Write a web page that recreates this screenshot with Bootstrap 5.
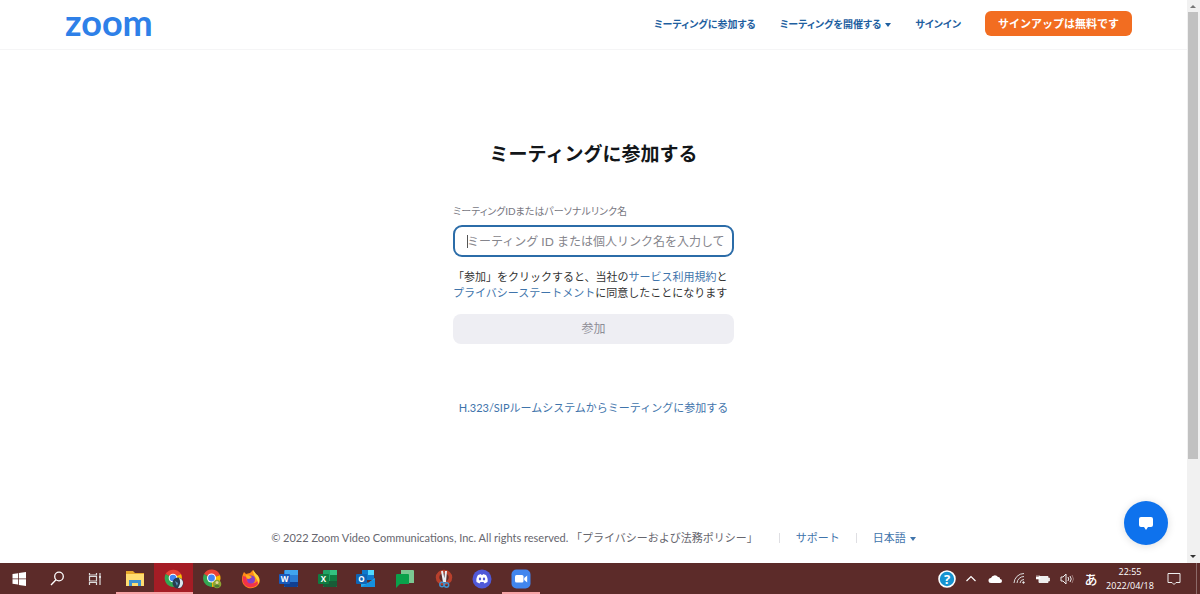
<!DOCTYPE html>
<html lang="ja">
<head>
<meta charset="utf-8">
<meta name="viewport" content="width=device-width, initial-scale=1">
<title>ミーティングに参加する - Zoom</title>
<link href="https://cdn.jsdelivr.net/npm/bootstrap@5.3.0/dist/css/bootstrap.min.css" rel="stylesheet">
<style>
body{font-family:Lato,"Noto Sans CJK JP",sans-serif;font-size:11px;line-height:16px;color:#232333;background:#fff}
a{color:#3f74ab;text-decoration:none}
.caret::after{content:"";display:inline-block;margin-left:4px;vertical-align:1px;border:4px solid transparent;border-top-color:currentColor;border-bottom:0;border-left-width:3px;border-right-width:3px}
.site-head{height:50px;padding:0 55px 2px 65px;border-bottom:1px solid #f5f5f6}
.brand{font-size:36px;line-height:40px;font-weight:700;color:#2e80e8}
.menu{gap:24px}
.menu a,.menu .caret{font-size:10px;font-weight:700;color:#1f5f9f;font-feature-settings:"palt"}
.plain{background:none;border:0;padding:0;color:#3f74ab}
.signup{background:#f26d21;color:#fff;font-size:11px;font-weight:700;line-height:16px;height:25px;width:147px;padding:0;border:0;border-radius:6px}
.join-main{padding-top:91px}
.join-title{font-size:19px;line-height:26px;font-weight:700;color:#131619;margin-bottom:36px}
.join-form{width:281px}
.field-label{font-size:10px;line-height:16px;color:#77777f;margin-bottom:6px;font-feature-settings:"palt"}
.id-wrap{position:relative}
.id-box{height:32px;font-size:12px;padding:0 8px 0 12px;border:2px solid #2b6ca8;border-radius:9px;color:#232333}
.id-box:focus{border-color:#2b6ca8;box-shadow:none}
.id-box::placeholder{color:#85858c}
.text-cursor{position:absolute;left:14px;top:10px;width:1px;height:13px;background:#555}
.terms{margin:12px 0 13px;white-space:nowrap;color:#333}
.join-btn{height:30px;font-size:12px;line-height:16px;padding:0;background:#eeeef3;color:#8d8d96;border:0;border-radius:8px}
.join-btn:disabled{background:#eeeef3;color:#8d8d96;opacity:1}
.room-link{margin-top:56px}
.site-foot{color:#66666e;padding-bottom:17px}
.foot-text{padding-right:21px}
.foot-part{border-left:1px solid #dfdfe3;line-height:10px}
.chat-btn{position:absolute;right:19px;bottom:18px;width:44px;height:44px;border:0;border-radius:50%;background:#0e72ed;box-shadow:0 1px 9px #0002}
.scroll-rail{width:13px;background:#f1f1f1;padding:0 2px 0 1px}
.scroll-thumb{height:83%;background:#c1c1c1}
.rail-arrow{height:12px;flex:none}
.taskbar{height:31px;background:#5c2b29;color:#fff;font-family:"Open Sans","Noto Sans CJK JP",sans-serif}
.apps{width:540px}
.app-btn{flex:1 1 0;background:none;border:0;border-bottom:2px solid transparent;padding:2px 0 0;display:flex;align-items:center;justify-content:center;min-width:0}
.app-btn.open{border-bottom-color:#f5a3a5}
.app-btn.current{background:#a51d25}
.app-btn svg{width:20px;height:20px}
.tray-btn{width:24px;background:none;border:0;padding:0;color:#fff;display:flex;align-items:center;justify-content:center}
.ime{font-size:13px;font-weight:500}
.clock{width:54px;font-size:9px;line-height:14px}
.notice{width:34px}
.desk-edge{width:9px}
.desk-edge::before{content:"";width:1px;height:100%;background:#8c6a69;margin-left:5px;display:block}
</style>
</head>
<body>
<div class="d-flex flex-column min-vh-100">
  <div class="d-flex flex-grow-1">
    <div class="position-relative d-flex flex-column flex-grow-1">
      <header class="site-head d-flex align-items-center justify-content-between">
        <a href="#" class="brand mb-1">zoom</a>
        <nav class="menu d-flex align-items-center">
          <a href="#">ミーティングに参加する</a>
          <button type="button" class="plain caret">ミーティングを開催する</button>
          <a href="#">サインイン</a>
          <button type="button" class="btn signup">サインアップは無料です</button>
        </nav>
      </header>
      <main class="join-main flex-grow-1 d-flex flex-column align-items-center">
        <h1 class="join-title">ミーティングに参加する</h1>
        <form class="join-form">
          <label class="field-label d-block" for="meeting-id">ミーティングIDまたはパーソナルリンク名</label>
          <div class="id-wrap">
            <input id="meeting-id" class="form-control id-box" type="text" placeholder="ミーティング ID または個人リンク名を入力して">
            <span class="text-cursor"></span>
          </div>
          <p class="terms">「参加」をクリックすると、当社の<a href="#">サービス利用規約</a>と<br><a href="#">プライバシーステートメント</a>に同意したことになります</p>
          <button type="submit" class="btn join-btn w-100" disabled>参加</button>
        </form>
        <a href="#" class="room-link">H.323/SIPルームシステムからミーティングに参加する</a>
      </main>
      <footer class="site-foot d-flex justify-content-center align-items-center">
        <span class="foot-text">© 2022 Zoom Video Communications, Inc. All rights reserved. 「プライバシーおよび法務ポリシー」</span>
        <span class="foot-part px-3"><a href="#">サポート</a></span>
        <span class="foot-part ps-3"><button type="button" class="plain caret">日本語</button></span>
      </footer>
      <button type="button" class="chat-btn d-flex align-items-center justify-content-center p-0" aria-label="チャット">
        <svg width="16" height="15" viewBox="0 0 16 15" fill="#fff"><path d="M3 1h10a2 2 0 0 1 2 2v6a2 2 0 0 1-2 2h-3l-2 3-2-3H3a2 2 0 0 1-2-2V3a2 2 0 0 1 2-2z"/></svg>
      </button>
    </div>
    <div class="scroll-rail d-flex flex-column" aria-hidden="true">
      <svg class="rail-arrow" viewBox="0 0 10 12"><path d="M2 8l3-3 3 3z" fill="#777"/></svg>
      <div class="flex-grow-1"><div class="scroll-thumb"></div></div>
      <svg class="rail-arrow" viewBox="0 0 10 12"><path d="M2 4l3 3 3-3z" fill="#333"/></svg>
    </div>
  </div>
  <div class="taskbar d-flex justify-content-between">
    <div class="apps d-flex">
      <button type="button" class="app-btn" aria-label="スタート"><svg viewBox="0 0 20 20" fill="#fff"><path d="M3.500 5l5.500-.8v5.300H3.500zM9.800 4.100L17 3v6.500H9.800zM3.500 10.300H9v5.300l-5.500-.8zM9.800 10.300H17V17l-7.200-1.100z"/></svg></button>
      <button type="button" class="app-btn" aria-label="検索"><svg viewBox="0 0 20 20" fill="none" stroke="#fff" stroke-width="1.300"><circle cx="11" cy="7.500" r="4.300"/><path d="M8 10.700L3 16"/></svg></button>
      <button type="button" class="app-btn" aria-label="タスクビュー"><svg viewBox="0 0 20 20" fill="none" stroke="#ddd" stroke-width="1.200"><path d="M3.500 4v2h7V4M3.500 16v-2.500h7V16M3.500 7.500h7v4.500h-7zM14 4v12"/><path d="M13 8h2" stroke-width="2"/></svg></button>
      <button type="button" class="app-btn open" aria-label="エクスプローラー"><svg viewBox="0 0 20 20"><path d="M1 2h7l2 2h9v13H1z" fill="#e8a92c"/><path d="M1 5h18v12H1z" fill="#ffdd71"/><path d="M4 11h12v6h-3v-3H7v3H4z" fill="#3f92d2"/></svg></button>
      <button type="button" class="app-btn open current" aria-label="Chrome"><svg viewBox="0 0 20 20"><path d="M9 9L1.600 5A9 9 0 0 1 17 5z" fill="#ea4335"/><path d="M9 9l8-4a9 9 0 0 1-7 13z" fill="#fbbc04"/><path d="M9 9L1.600 5A9 9 0 0 0 10 18z" fill="#34a853"/><circle cx="9" cy="9" r="4.300" fill="#fff"/><circle cx="9" cy="9" r="3.300" fill="#4285f4"/><circle cx="14" cy="14" r="5.500" fill="#263d52"/><path d="M15 9c4 1 5 5 3 8-1 2-3 2-4 2 2-3 3-6 1-10z" fill="#dce8ef"/><path d="M11 12l3 2-1 3z" fill="#5994bd"/></svg></button>
      <button type="button" class="app-btn" aria-label="Chrome 2"><svg viewBox="0 0 20 20"><path d="M9.500 9.500L2 5a9 9 0 0 1 16 1z" fill="#ea4335"/><path d="M9.500 9.500L18 6a9 9 0 0 1-8 12z" fill="#fbbc04"/><path d="M9.500 9.500L2 5a9 9 0 0 0 8 13z" fill="#34a853"/><circle cx="9.500" cy="9" r="4.500" fill="#fff"/><circle cx="9.500" cy="9" r="3.400" fill="#4285f4"/><circle cx="15" cy="15" r="4.300" fill="#8da634"/><circle cx="15" cy="13.500" r="1.500" fill="#e3d89a"/><path d="M12 17q3-3 6 0-3 3-6 0" fill="#4d7a34"/></svg></button>
      <button type="button" class="app-btn" aria-label="Firefox"><svg viewBox="0 0 20 20"><path d="M2 5l1-2 2 2 4-1 3-3 3 4c4 3 5 8 2 11a9 9 0 0 1-14 0C0 12 1 8 2 5z" fill="#ff8a16"/><path d="M2 7c-2 8 4 13 10 11 5-1 7-6 6-10-1 5-4 7-8 6-4 0-5-3-4-6z" fill="#f1324b"/><path d="M12 1l3 4c4 3 4 7 2 10 0-6-5-7-5-14z" fill="#ffd43b"/><circle cx="10" cy="10.500" r="4" fill="#8440c8"/><path d="M5 6c3 0 4 1 6 2l-3 2c-2 0-3-1-3-4z" fill="#ffb01f"/></svg></button>
      <button type="button" class="app-btn" aria-label="Word"><svg viewBox="0 0 20 20"><rect x="5" y="1" width="14" height="17" rx="1" fill="#2b7cd3"/><path d="M6 1h13v5H6z" fill="#41a5ee"/><path d="M5 13h14v4l-1 1H6l-1-1z" fill="#103f91"/><rect y="5" width="11" height="10" rx="1" fill="#185abd"/><text x="5.500" y="13" text-anchor="middle" font-size="8" font-weight="700" fill="#fff">W</text></svg></button>
      <button type="button" class="app-btn" aria-label="Excel"><svg viewBox="0 0 20 20"><rect x="5" y="1" width="14" height="17" rx="1" fill="#21a366"/><path d="M12 1h7v5h-7z" fill="#33c481"/><path d="M5 12h14v5l-1 1H6l-1-1z" fill="#185c37"/><path d="M12 6h7v6h-7z" fill="#107c41"/><rect y="5" width="11" height="10" rx="1" fill="#107c41"/><text x="5.500" y="13" text-anchor="middle" font-size="8" font-weight="700" fill="#fff">X</text></svg></button>
      <button type="button" class="app-btn" aria-label="Outlook"><svg viewBox="0 0 20 20"><path d="M6 1h12v10H6z" fill="#0f79cc"/><path d="M12 1h6v5h-6z" fill="#50d9ff"/><path d="M5 9l7 5 7-5v9H5z" fill="#28a8ea"/><path d="M5 18l14-8v8z" fill="#1490df"/><rect y="5" width="11" height="10" rx="1" fill="#0f65b5"/><text x="5.500" y="13" text-anchor="middle" font-size="8" font-weight="700" fill="#fff">O</text></svg></button>
      <button type="button" class="app-btn" aria-label="Google Chat"><svg viewBox="0 0 20 20"><path d="M6 1h12a1 1 0 0 1 1 1v12H6z" fill="#7bc792"/><path d="M2 5h11a1 1 0 0 1 1 1v9H5l-4 4V6a1 1 0 0 1 1-1z" fill="#0aa14b"/></svg></button>
      <button type="button" class="app-btn" aria-label="Snipping Tool"><svg viewBox="0 0 20 20" fill="none"><ellipse cx="10" cy="8.500" rx="6.500" ry="6" stroke="#b8402c" stroke-width="3.500"/><path d="M8 2l2 11M12 2l-1 11" stroke="#e8edf2" stroke-width="2"/><circle cx="8" cy="15.500" r="2.200" stroke="#3f91cf" stroke-width="1.500"/><circle cx="12.500" cy="16" r="2.200" stroke="#3f91cf" stroke-width="1.500"/></svg></button>
      <button type="button" class="app-btn" aria-label="Discord"><svg viewBox="0 0 20 20"><circle cx="10" cy="10" r="9.500" fill="#5059d8"/><path d="M6 6l3-1 .5 1h1l.5-1 3 1c1.500 2 2 5 1.500 7l-3 1.500-1-1.500h-3l-1 1.500-3-1.500C4 11 4.500 8 6 6z" fill="#fff"/><ellipse cx="8" cy="10" rx="1.200" ry="1.400" fill="#5059d8"/><ellipse cx="12" cy="10" rx="1.200" ry="1.400" fill="#5059d8"/></svg></button>
      <button type="button" class="app-btn open" aria-label="Zoom"><svg viewBox="0 0 20 20"><rect x=".5" y=".5" width="19" height="19" rx="5" fill="#4186ee"/><rect x="4" y="6" width="8.500" height="7.500" rx="1.500" fill="#fff"/><path d="M13.200 9l3-2.500v7l-3-2.500z" fill="#fff"/></svg></button>
    </div>
    <div class="d-flex">
      <button type="button" class="tray-btn" aria-label="ヘルプ"><svg width="18" height="18" viewBox="0 0 18 18"><circle cx="9" cy="9" r="8" fill="#1593d1" stroke="#fff" stroke-width="1.600"/><text x="9" y="13.500" text-anchor="middle" font-size="13" font-weight="700" fill="#fff">?</text></svg></button>
      <button type="button" class="tray-btn" aria-label="隠れているインジケーター"><svg width="12" height="10" viewBox="0 0 12 10" fill="none" stroke="#fff" stroke-width="1.200"><path d="M1.500 7L6 2.500 10.500 7"/></svg></button>
      <button type="button" class="tray-btn" aria-label="OneDrive"><svg width="14" height="10" viewBox="0 0 14 10" fill="#fff"><path d="M3 9a2.500 2.500 0 0 1 0-5 4 4 0 0 1 7-1c2 0 2 1 2 2a2 2 0 0 1 0 4z"/></svg></button>
      <button type="button" class="tray-btn" aria-label="ネットワーク"><svg width="13" height="13" viewBox="0 0 13 13" fill="none" stroke="#ddd"><path d="M1 11A10 10 0 0 1 11 1.500M4 11a7 7 0 0 1 7-6.500M7 11a4 4 0 0 1 4-3.500"/><circle cx="10.500" cy="10.500" r=".8" fill="#fff"/></svg></button>
      <button type="button" class="tray-btn" aria-label="バッテリー"><svg width="14" height="10" viewBox="0 0 14 10"><path d="M3 2.500h9v6H3z" fill="#eee" stroke="#eee"/><path d="M12.500 4h1v3h-1zM1 1v2M3 1v2M0 3h4v2H0z" fill="#fff" stroke="#fff" stroke-width=".6"/></svg></button>
      <button type="button" class="tray-btn" aria-label="音量"><svg width="14" height="12" viewBox="0 0 14 12" fill="none" stroke="#eee"><path d="M1 4h2l3-3v10L3 8H1z"/><path d="M8 4q1.500 2 0 4M10 3q2.500 3 0 6" /><path d="M12 2q3 4 0 8" stroke="#9a7674"/></svg></button>
      <button type="button" class="tray-btn ime">あ</button>
      <div class="clock text-center d-flex flex-column justify-content-center"><span>22:55</span><span>2022/04/18</span></div>
      <button type="button" class="tray-btn notice" aria-label="通知"><svg width="14" height="14" viewBox="0 0 14 14" fill="none" stroke="#eee"><path d="M1 1.500h12v9H9l-2 2-2-2H1z"/></svg></button>
      <div class="desk-edge"></div>
    </div>
  </div>
</div>
<script src="https://cdn.jsdelivr.net/npm/bootstrap@5.3.0/dist/js/bootstrap.bundle.min.js"></script>
</body>
</html>
